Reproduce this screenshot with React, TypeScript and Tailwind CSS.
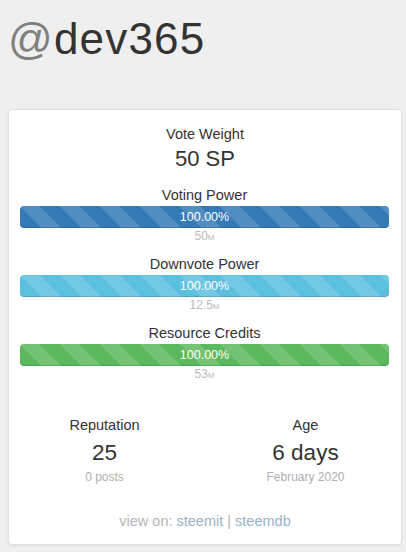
import React from "react";

const stripe =
  "bg-[linear-gradient(45deg,rgba(255,255,255,.15)_25%,transparent_25%,transparent_50%,rgba(255,255,255,.15)_50%,rgba(255,255,255,.15)_75%,transparent_75%,transparent)] bg-[length:40px_40px]";

function Meter({
  label,
  color,
  value,
  unit,
}: {
  label: string;
  color: string;
  value: string;
  unit: string;
}) {
  return (
    <div className="flex flex-col items-stretch">
      <div className="text-center text-[14.5px] leading-[20px] text-[#333]">{label}</div>
      <div
        className={`mt-[1px] h-[22px] rounded-[4px] ${color} ${stripe} shadow-[inset_0_-1px_0_rgba(0,0,0,0.15)] flex items-center justify-center text-white text-[12.5px] leading-[22px]`}
      >
        100.00%
      </div>
      <div className="text-center text-[12px] leading-[17px] text-[#bbb]">
        {value}
        <span className="[font-variant:small-caps]">{unit}</span>
      </div>
    </div>
  );
}

export default function App() {
  return (
    <div
      className="min-h-[552px] w-[406px] bg-[#efefef] flex flex-col"
      style={{ fontFamily: '"Liberation Sans", Arial, sans-serif' }}
    >
      <div className="pt-[15px] pl-[8px] h-[63px] text-[44px] leading-[48px] tracking-[1.2px]">
        <span className="text-[#808080]">@</span>
        <span className="text-[#333]">dev365</span>
      </div>
      <div className="mt-[46px] ml-[8px] mr-[4px] bg-white border border-[#e2e2e2] rounded-[4px] shadow-[0_1px_2px_rgba(0,0,0,0.08)] pt-[14px] pb-[13px]">
        <div className="text-center text-[14.5px] leading-[20px] text-[#333]">Vote Weight</div>
        <div className="text-center text-[22px] leading-[30px] text-[#333]">50 SP</div>
        <div className="mt-[11px] pl-[11px] pr-[12px] flex flex-col gap-[9px]">
          <Meter label="Voting Power" color="bg-[#337ab7]" value="50" unit="m" />
          <Meter label="Downvote Power" color="bg-[#5bc0de]" value="12.5" unit="m" />
          <Meter label="Resource Credits" color="bg-[#5cb85c]" value="53" unit="m" />
        </div>
        <div className="mt-[32px] grid grid-cols-[180px_180px] gap-x-[21px] justify-center text-center">
          <div className="flex flex-col">
            <div className="text-[14.5px] leading-[20px] text-[#333]">Reputation</div>
            <div className="mt-[3px] text-[22.5px] leading-[30px] text-[#333]">25</div>
            <div className="mt-[1px] text-[12px] leading-[17px] text-[#b0b0b0]">0 posts</div>
          </div>
          <div className="flex flex-col">
            <div className="text-[14.5px] leading-[20px] text-[#333]">Age</div>
            <div className="mt-[3px] text-[22.5px] leading-[30px] text-[#333]">6 days</div>
            <div className="mt-[1px] text-[12px] leading-[17px] text-[#b0b0b0]">February 2020</div>
          </div>
        </div>
        <div className="mt-[25px] text-center text-[14.5px] leading-[20px] text-[#b5b5b5]">
          view on: <span className="text-[#97b3c9]">steemit</span> |{" "}
          <span className="text-[#97b3c9]">steemdb</span>
        </div>
      </div>
    </div>
  );
}
